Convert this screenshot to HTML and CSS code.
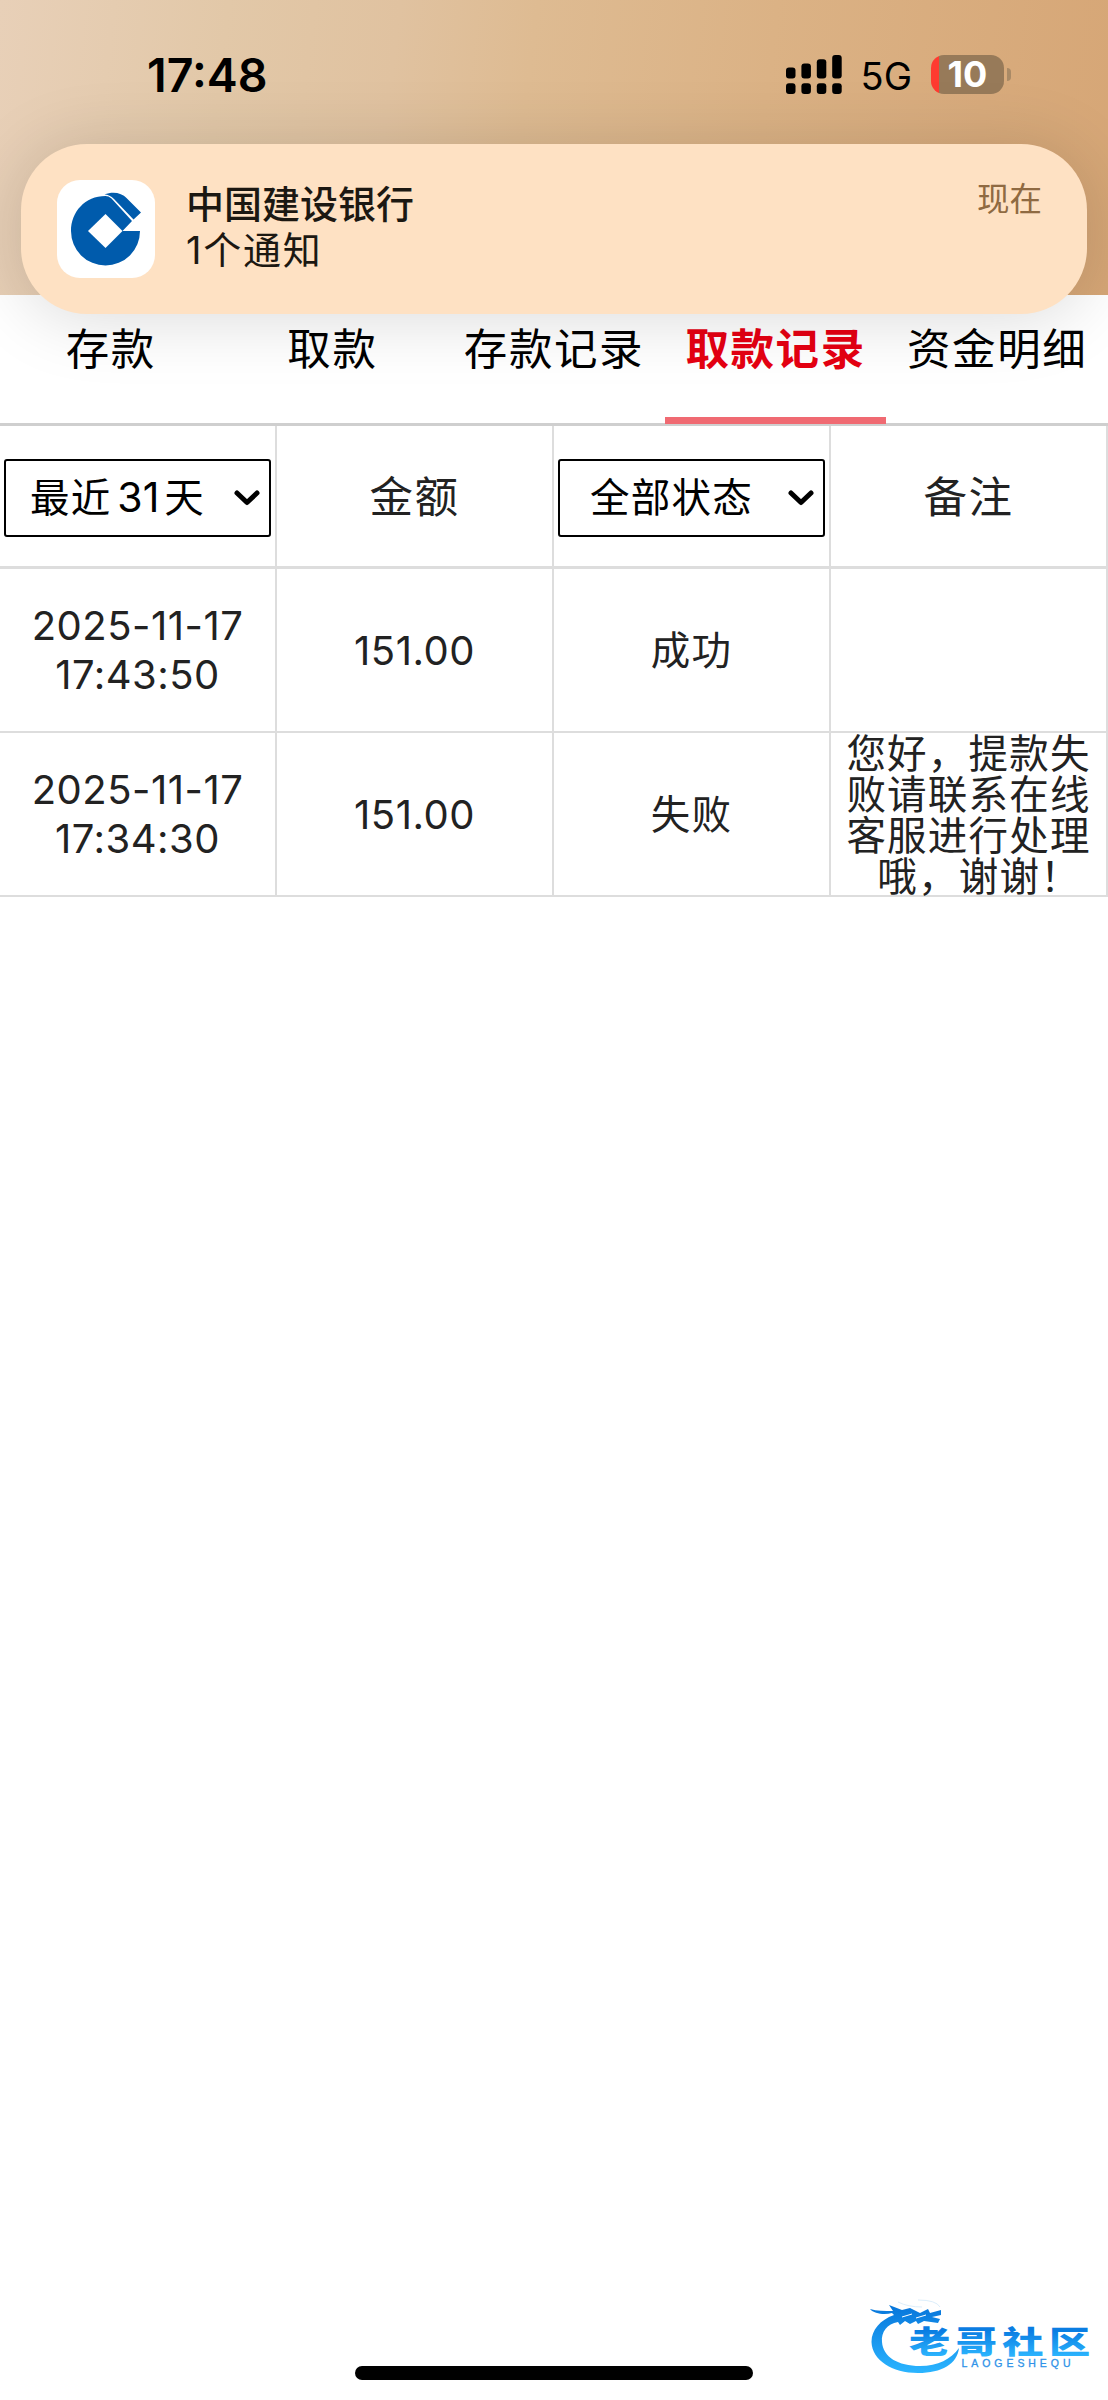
FILE: index.html
```html
<!DOCTYPE html>
<html lang="zh-CN">
<head>
  <meta charset="UTF-8">
  <meta name="viewport" content="width=device-width, initial-scale=1.0">
  <title>取款记录</title>
  <link rel="stylesheet" href="styles.css">
</head>
<body>
  <div class="header">
    <div class="status-bar">
      <span class="time">17:48</span>
      <div class="status-right">
        <svg class="signal" width="56" height="40" viewBox="0 0 56 40">
          <rect x="0" y="12.5" width="9.5" height="11" rx="3"/>
          <rect x="15.4" y="8.5" width="9.5" height="15" rx="3"/>
          <rect x="30.8" y="4.3" width="9.5" height="19.2" rx="3"/>
          <rect x="46.2" y="0" width="9.5" height="23.5" rx="3"/>
          <rect x="0" y="28.2" width="9.5" height="10.8" rx="3"/>
          <rect x="15.4" y="28.2" width="9.5" height="10.8" rx="3"/>
          <rect x="30.8" y="28.2" width="9.5" height="10.8" rx="3"/>
          <rect x="46.2" y="28.2" width="9.5" height="10.8" rx="3"/>
        </svg>
        <span class="network">5G</span>
        <div class="battery"><span>10</span></div>
        <span class="battery-cap"></span>
      </div>
    </div>
  </div>

  <!-- 顶部通知 -->
  <div class="notice">
    <div class="notice-icon">
      <svg width="98" height="98" viewBox="0 0 98 98">
        <path fill="#005bac" d="M48.5 16 C28 16 14 32 14 51 A34.5 34.5 0 0 0 83 51 L65.5 51 L75 41 L54.5 18.5 C52.5 16.8 50.5 16 48.5 16 Z"/>
        <path fill="#005bac" d="M47.5 14.5 C56 11 65 13 69.5 18 L84 32.5 L76.5 39.5 L57 19 C54 16 51 14.5 47.5 14.5 Z"/>
        <path fill="#fff" d="M48.5 34 L65.5 51 L48.5 68 L31 51 Z"/>
      </svg>
    </div>
    <div class="notice-text">
      <div class="notice-title">中国建设银行</div>
      <div class="notice-desc">1个通知</div>
    </div>
    <div class="notice-time">现在</div>
  </div>

  <div class="tabs">
    <div class="tab">存款</div>
    <div class="tab">取款</div>
    <div class="tab">存款记录</div>
    <div class="tab active">取款记录</div>
    <div class="tab">资金明细</div>
  </div>

  <div class="record">
    <div class="row row-head">
      <div class="cell">
        <div class="select">
          <span>最近<i>31</i>天</span>
          <svg width="26" height="18" viewBox="0 0 26 18"><path d="M3 4 L13 13.5 L23 4" fill="none" stroke="#000" stroke-width="5" stroke-linecap="round" stroke-linejoin="round"/></svg>
        </div>
      </div>
      <div class="cell">金额</div>
      <div class="cell">
        <div class="select">
          <span>全部状态</span>
          <svg width="26" height="18" viewBox="0 0 26 18"><path d="M3 4 L13 13.5 L23 4" fill="none" stroke="#000" stroke-width="5" stroke-linecap="round" stroke-linejoin="round"/></svg>
        </div>
      </div>
      <div class="cell">备注</div>
    </div>
    <div class="row">
      <div class="cell num">2025-11-17<br>17:43:50</div>
      <div class="cell num">151.00</div>
      <div class="cell">成功</div>
      <div class="cell"></div>
    </div>
    <div class="row">
      <div class="cell num">2025-11-17<br>17:34:30</div>
      <div class="cell num">151.00</div>
      <div class="cell">失败</div>
      <div class="cell remark"><p>您好，提款失<br>败请联系在线<br>客服进行处理<br>哦，谢谢<span class="mark">！</span></p></div>
    </div>
  </div>

  <!-- 水印 -->
  <svg class="watermark" width="258" height="120" viewBox="0 0 258 120">
    <defs>
      <linearGradient id="blue" gradientUnits="userSpaceOnUse" x1="0" y1="28" x2="0" y2="92">
        <stop offset="0" stop-color="#0878dc"/>
        <stop offset="1" stop-color="#2ab4ff"/>
      </linearGradient>
      <linearGradient id="word" x1="0" y1="0" x2="0" y2="1">
        <stop offset=".3" stop-color="#0a7de2"/>
        <stop offset=".85" stop-color="#2bb3fd"/>
      </linearGradient>
    </defs>
    <path fill="url(#blue)" d="M44 35 C30 40 21.5 50 21.5 62 C22 80 42 93 68 93 C92 93 107 84 109 68 C101 79 88 86 70 86 C48 86 33 77 32 62 C31 52 37 44 48 42 L50 45 L55 41 L60 44 L66 41 L68 44 L74 41 L88 43 L90 39 L82 37 L91 35 L91 30 L80 33 L78 29 L70 33 L60 28 L52 30 L39 25 L43 31 C34 31 27 31 20 29 C24 34 35 35 42 33 Z"/>
    <path fill="none" stroke="#fff" stroke-width="1" d="M52 37 L62 34 M66 38 L76 35"/>
    <path fill="none" stroke="#dceefb" stroke-width="1" d="M48 22 Q58 27 72 27 M68 20 Q86 20 90 27"/>
    <text class="wm-text" transform="translate(59 73) scale(1.33 1)" fill="url(#word)">老哥社区</text>
    <text class="wm-sub" x="111.5" y="86.500" textLength="109">LAOGESHEQU</text>
  </svg>

  <div class="home-bar"></div>
</body>
</html>
```
FILE: styles.css
```css
* {
  box-sizing: border-box;
}

body {
  margin: 0;
  position: relative;
  height: 2400px;
  overflow: hidden;
  background-color: #fff;
  color: #222;
  font-family: Inter, "Noto Sans CJK SC", sans-serif;
}

.header {
  height: 295px;
  background: linear-gradient(97deg, #e8d0b8 0%, #e2c8a8 20%, #e0c2a0 35%, #debb92 47%, #dbb285 68%, #d6a676 100%);
}

.status-bar {
  display: flex;
  justify-content: space-between;
  align-items: center;
  padding: 49px 97px 0 147px;
  height: 100px;
  color: #000;
}

.time {
  font-size: 46.5px;
  font-weight: 600;
}

.status-right {
  display: flex;
  align-items: center;
}

.network {
  margin: 3px 19px 0 19px;
  font-size: 38px;
  line-height: 40px;
}

.battery {
  width: 73px;
  height: 39px;
  border-radius: 13px;
  background: linear-gradient(90deg, #ff3b30 8px, #977a59 8px);
  color: #fff;
  font-size: 36px;
  font-weight: 700;
  line-height: 39px;
  text-align: center;
}

.battery-cap {
  width: 4px;
  height: 13px;
  margin-left: 3px;
  border-radius: 0 4px 4px 0;
  background-color: #a98a66;
}

.notice {
  position: absolute;
  left: 21px;
  top: 144px;
  width: 1066px;
  height: 170px;
  display: flex;
  padding: 36px 45px 0 36px;
  border-radius: 66px;
  background-color: #fee1c3;
  box-shadow: 0 4px 70px rgba(0, 0, 0, .15);
}

.notice-icon {
  width: 98px;
  height: 98px;
  border-radius: 23px;
  background-color: #fff;
}

.notice-text {
  flex: 1;
  margin-left: 31px;
  padding-top: 1px;
  color: #1c1812;
  font-size: 38px;
  line-height: 46px;
}

.notice-title {
  font-weight: 500;
}

.notice-desc {
  letter-spacing: 1.8px;
}

.notice-time {
  margin-top: 2px;
  color: #8f6a42;
  font-size: 32.5px;
  line-height: 36px;
}

.tabs {
  display: flex;
  height: 131px;
  border-bottom: 3px solid #cfcfcf;
}

.tab {
  flex: 1;
  height: 129px;
  padding-top: 22px;
  color: #000;
  font-size: 43.5px;
  letter-spacing: 1.6px;
  line-height: 64px;
  text-align: center;
  white-space: nowrap;
}

.tab.active {
  color: #e60012;
  font-weight: 700;
  border-bottom: 7px solid #f06a72;
}

.row {
  display: grid;
  grid-template-columns: repeat(4, 277px);
  grid-template-rows: 164px;
}

.row-head {
  grid-template-rows: 143px;
}

.cell {
  display: flex;
  align-items: center;
  justify-content: center;
  padding-top: 3px;
  border-right: 2px solid #ddd;
  border-bottom: 2px solid #ddd;
  font-size: 39.5px;
  letter-spacing: 1.2px;
  line-height: 49px;
  text-align: center;
}

.row-head .cell {
  border-bottom-width: 3px;
  font-size: 43.5px;
  letter-spacing: 1.6px;
}

.cell.num {
  padding-top: 0;
  font-size: 40px;
  letter-spacing: .5px;
}

.remark p {
  margin: 0;
  line-height: 41px;
}

.mark {
  letter-spacing: -20px;
}

.row-head .select {
  display: flex;
  align-items: center;
  width: 267px;
  height: 78px;
  padding: 1px 9px 0 0;
  border: 2px solid #000;
  border-radius: 3px;
  color: #000;
  font-size: 39.5px;
  letter-spacing: 1.2px;
}

.select span {
  flex: 1;
  padding-right: 5px;
}

.select i {
  margin: 0 5px 0 6px;
  font-size: 41px;
  font-style: normal;
  letter-spacing: 0;
}

.watermark {
  position: absolute;
  left: 850px;
  top: 2280px;
}

.wm-text {
  font-family: "Noto Sans CJK SC", sans-serif;
  font-size: 31px;
  font-weight: 900;
  letter-spacing: 4.1px;
}

.wm-sub {
  font-family: "Liberation Sans", sans-serif;
  font-size: 10.5px;
  fill: #2f93e8;
  stroke: #2f93e8;
  stroke-width: .3px;
}

.home-bar {
  position: absolute;
  left: 355px;
  top: 2366px;
  width: 398px;
  height: 14px;
  border-radius: 7px;
  background-color: #000;
}
```
